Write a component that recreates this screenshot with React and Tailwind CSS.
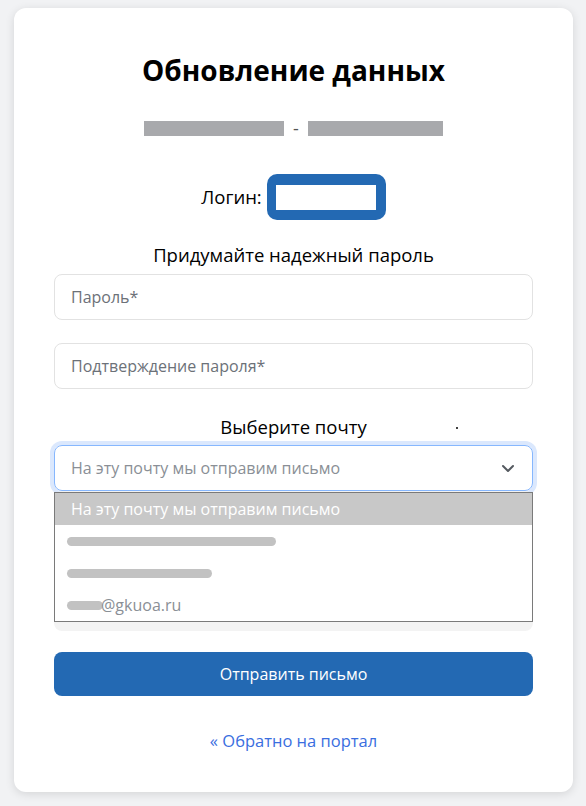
import React from "react";

const font = { fontFamily: '"Open Sans", "Noto Sans", "Liberation Sans", sans-serif' };

function Input({ placeholder }) {
  return (
    <input
      type="password"
      placeholder={placeholder}
      className="block h-[46px] w-full rounded-lg border border-[#e2e2e2] bg-white px-4 text-base text-gray-800 placeholder:text-[#6c7178] outline-none"
    />
  );
}

function Redacted({ width, className = "" }) {
  return <span className={"inline-block h-[9px] rounded-full bg-[#c2c2c2] align-middle " + className} style={{ width }} />;
}

export default function App() {
  return (
    <div className="min-h-[806px] bg-[#f1f2f4] pt-2 px-[14px]" style={font}>
      <div className="w-[559px] h-[784px] rounded-xl bg-white px-10 pt-[42px] shadow-[0_2px_10px_rgba(0,0,0,0.12)]">
        {/* Header */}
        <h1 className="text-center text-[28px] font-bold leading-[40px] text-black">Обновление данных</h1>

        <div className="mt-[27px] flex items-center justify-center gap-[9px] h-[22px]">
          <span className="inline-block h-[15px] w-[140px] bg-[#a8a9ac]" />
          <span className="text-[18px] text-[#555]">-</span>
          <span className="inline-block h-[15px] w-[135px] bg-[#a8a9ac]" />
        </div>

        <div className="mt-[35px] flex items-center justify-center gap-[5px]">
          <span className="text-[18.5px] text-black">Логин:</span>
          <span className="flex h-[46px] w-[119px] items-center justify-center rounded-[10px] bg-[#2369b3]">
            <span className="h-[25px] w-[100px] bg-white" />
          </span>
        </div>

        {/* Password */}
        <p className="mt-[22px] text-center text-[18.5px] leading-[26px] text-black">Придумайте надежный пароль</p>
        <div className="mt-[6px]">
          <Input placeholder="Пароль*" />
        </div>
        <div className="mt-[23px]">
          <Input placeholder="Подтверждение пароля*" />
        </div>

        {/* Email */}
        <div className="relative mt-[25px] text-center">
          <span className="text-[18.5px] leading-[26px] text-black">Выберите почту</span>
          <span className="absolute left-[402px] top-[13px] h-[2px] w-[2px] rounded-full bg-black" />
        </div>
        <div className="relative mt-[5px]">
          <div className="flex h-[46px] items-center justify-between rounded-lg border border-[#86b7fe] px-4 ring-4 ring-[#dbe8fd]">
            <span className="text-base text-[#8a8f96]">На эту почту мы отправим письмо</span>
            <svg width="16" height="16" viewBox="0 0 16 16" fill="none" stroke="#555a60" strokeWidth="2" strokeLinecap="round" strokeLinejoin="round">
              <path d="M3 6l5 5 5-5" />
            </svg>
          </div>
          <div className="mt-0 h-[140px] rounded-lg bg-[#f3f3f3]" />
          <div className="absolute left-0 right-0 top-[47px] border border-[#7a7a7a] bg-white">
            <div className="flex h-[32px] items-center bg-[#c8c8c8] px-4 text-base text-white">На эту почту мы отправим письмо</div>
            <div className="flex h-[32px] items-center px-3">
              <Redacted width={209} />
            </div>
            <div className="flex h-[32px] items-center px-3">
              <Redacted width={145} />
            </div>
            <div className="flex h-[32px] items-center px-3 text-base text-[#8a8f96]">
              <Redacted width={36} className="mr-[-2px]" />
              <span>@gkuoa.ru</span>
            </div>
          </div>
        </div>

        {/* Submit */}
        <button className="mt-[21px] h-[44px] w-full rounded-lg bg-[#2369b3] text-base text-white">Отправить письмо</button>

        <div className="mt-[33px] text-center">
          <a href="#" className="text-[16.5px] text-[#3a6ee0]">« Обратно на портал</a>
        </div>
      </div>
    </div>
  );
}
